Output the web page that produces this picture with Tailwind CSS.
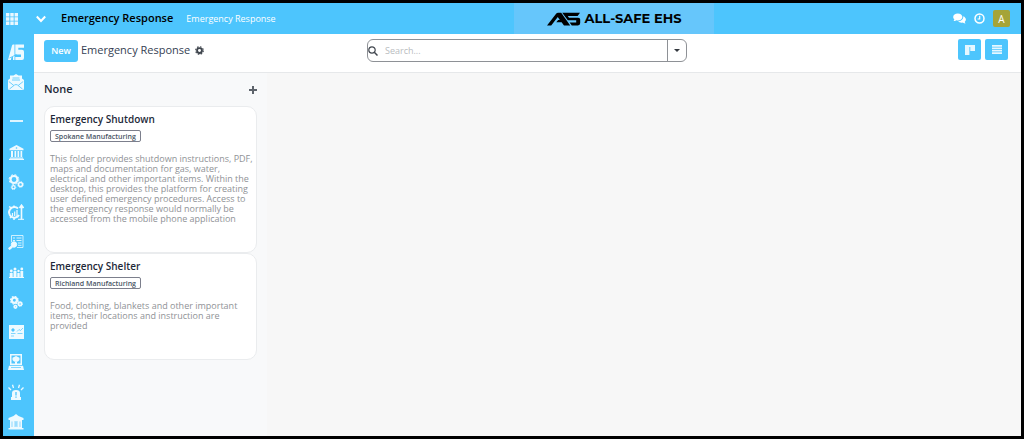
<!DOCTYPE html>
<html lang="en">
<head>
  <meta charset="UTF-8" />
  <title>Emergency Response</title>
  <meta name="viewport" content="width=device-width, initial-scale=1.0" />
  <script src="https://cdn.jsdelivr.net/npm/@tailwindcss/browser@4"></script>
</head>
<body class="h-screen overflow-hidden border-3 border-black bg-[#f7f7f7] font-['Open_Sans','Noto_Sans',sans-serif] text-gray-800 flex flex-col">

  <!-- Top bar -->
  <header class="h-[31px] shrink-0 bg-[#4dc5fd] flex items-center text-white pr-[11px]">
    <div class="flex flex-1 items-center">
      <button aria-label="Apps" class="ml-[3px]">
        <svg class="size-3" viewBox="0 0 12 12" fill="#e9f8ff"><path d="M0 0h3.4v3.4H0zM4.3 0h3.4v3.4H4.3zM8.6 0H12v3.4H8.6zM0 4.3h3.4v3.4H0zM4.3 4.3h3.4v3.4H4.3zM8.6 4.3H12v3.4H8.6zM0 8.6h3.4V12H0zM4.3 8.6h3.4V12H4.3zM8.6 8.6H12V12H8.6z"/></svg>
      </button>
      <button aria-label="Toggle menu" class="ml-[18px]">
        <svg class="h-[8px] w-[10px]" viewBox="0 0 10 8" fill="none" stroke="#fff" stroke-width="2"><path d="M.8 1.5L5 6l4.2-4.5"/></svg>
      </button>
      <a href="#" class="ml-[15px] text-[11px] font-semibold text-black whitespace-nowrap">Emergency Response</a>
      <a href="#" class="ml-[13px] text-[9px] whitespace-nowrap">Emergency Response</a>
    </div>
    <div class="h-full w-[200px] bg-[#66c6fb] flex items-center justify-center gap-[4px] text-black">
      <svg class="h-[14px] w-[34px]" viewBox="0 0 34 14" fill="currentColor">
        <path d="M0 13.4L9.300 1.600Q10 .8 11 .8h3.200l9 12.600H17l-2.400-3.200H9.300l1.800-2.300h1.700L10.800 5 4.200 13.400z"/>
        <path d="M15.200.8H33l-2.400 3.100H20.800l1.200 1.800h9.200q2 0 2 1.800v3.600q0 2.300-2.300 2.300h-6.100L22.600 10.500h6.600V8.300h-8.400z"/>
      </svg>
      <span class="font-['Montserrat','Lato',sans-serif] text-[13px] font-bold leading-none whitespace-nowrap">ALL-SAFE EHS</span>
    </div>
    <div class="flex w-[296px] items-center justify-end">
      <button aria-label="Messages">
        <svg class="h-[11px] w-[13px]" viewBox="0 0 13 11" fill="#fff"><path d="M4.800.5C2.200.5.2 2 .2 4c0 1 .5 1.800 1.200 2.400C1.200 7.200.8 7.700.4 8.100c1.200 0 2.200-.4 2.900-.9.500.1 1 .2 1.500.2 2.600 0 4.600-1.500 4.600-3.400S7.400.5 4.800.5z"/><path d="M10.300 3.200c.1 3.200-2.400 5-5.300 5.100.8.900 2.100 1.400 3.500 1.400.5 0 .9-.1 1.300-.2.700.6 1.700.9 2.800.9-.4-.4-.7-.8-.9-1.500.7-.6 1.200-1.300 1.200-2.300 0-1.500-1.100-2.700-2.600-3.400z"/></svg>
      </button>
      <button aria-label="Activities" class="ml-[8px]">
        <svg class="size-[11px]" viewBox="0 0 11 11" fill="none" stroke="#fff" stroke-width="1.500"><circle cx="5.500" cy="5.500" r="4.500"/><path d="M5.700 2.800V6H3.600" stroke-width="1.200"/></svg>
      </button>
      <button class="ml-[8px] size-[17px] rounded-xs bg-[#a5a437] text-[10px] leading-none text-white">A</button>
    </div>
  </header>

  <div class="flex flex-1 min-h-0">

    <!-- App sidebar -->
    <nav class="w-[31px] shrink-0 bg-[#4dc5fd] pt-[3px] pr-[5px] flex flex-col text-[#eefaff] overflow-hidden">
      <a href="#" aria-label="All-Safe" class="h-[30px] shrink-0 grid place-items-center">
        <svg class="h-[17px] w-4" viewBox="0 0 16 17" fill="currentColor"><path d="M0 16L4 1.500Q4.300.5 5.300.5H6.500V16H5v-3H3.600L2.800 16z"/><path d="M7.300.5H16v3.200h-5.700v2H14q2 0 2 2V14q0 2-2 2H7.300v-3H13v-2.500H7.300z"/><path d="M1.500 14l7-3.500" stroke="#4dc5fd" stroke-width=".8"/></svg>
      </a>
      <a href="#" aria-label="Mail" class="h-[30px] shrink-0 grid place-items-center">
        <svg class="size-4" viewBox="0 0 16 16" fill="currentColor"><path d="M8 0l2.500 1.500H14v3l2 1.500v8.500q0 1.500-1.500 1.500h-13Q0 16 0 14.500V6l2-1.500v-3h3.500z"/><path d="M4.500 4h7M4 6h8M.8 7.500l5 4M15.200 7.500l-5 4M1.500 15l5-4q1.500-1 3 0l5 4" fill="none" stroke="#4dc5fd" stroke-width=".8"/></svg>
      </a>
      <hr class="mx-auto mt-[23px] mb-[15px] w-[13px] border-t-2 border-[#dff5ff]" />
      <a href="#" aria-label="Organization" class="h-[30px] shrink-0 grid place-items-center">
        <svg class="size-[15px]" viewBox="0 0 15 15" fill="currentColor"><path d="M7.500 0L14.500 3.800V5.200H.5V3.800zM2 6h2v6H2zM5.500 6h1.700v6H5.500zM8.500 6h1.700v6H8.500zM11.500 6h1.700v6h-1.700zM1 12.500h13V13.500H1zM0 13.800h15V15H0z"/><circle cx="7.500" cy="3" r=".8" fill="#4dc5fd"/></svg>
      </a>
      <a href="#" aria-label="Settings" class="h-[30px] shrink-0 grid place-items-center">
        <svg class="size-4" viewBox="0 0 16 16" fill="none" stroke="currentColor"><circle cx="6" cy="5.500" r="3.500" stroke-width="2.200"/><circle cx="6" cy="5.500" r="4.900" stroke-width="1" stroke-dasharray="2 1.850"/><circle cx="12.500" cy="10.500" r="2" stroke-width="1.500"/><circle cx="12.500" cy="10.500" r="3" stroke-width=".7" stroke-dasharray="1.200 1.150"/><circle cx="5.500" cy="13.300" r="1.600" stroke-width="1.300"/><circle cx="5.500" cy="13.300" r="2.400" stroke-width=".6" stroke-dasharray="1 .9"/></svg>
      </a>
      <a href="#" aria-label="Performance" class="h-[30px] shrink-0 grid place-items-center">
        <svg class="size-4" viewBox="0 0 16 16" fill="none" stroke="currentColor"><path d="M10 4.500A5.300 5.300 0 1 0 11 11" stroke-width="2"/><path d="M1 2.700l2 1M.3 8H2M6 1.500v2M2 14l1.500-1.500M6 13.500V16" stroke-width="1.500"/><path d="M4.500 12V9M6.700 12V7.500M9 12V6" stroke-width="1.200"/><path d="M13.500 15.500V2M11.500 4l2-2.800 2 2.800" stroke-width="1.600"/><path d="M10 15.300h6"/></svg>
      </a>
      <a href="#" aria-label="Inspections" class="h-[30px] shrink-0 grid place-items-center">
        <svg class="size-4" viewBox="0 0 16 16" fill="none" stroke="currentColor"><path d="M3.500 8V1.500h11.500v12H9" stroke-width="1" opacity=".8"/><path d="M5 4h2M8.500 4h5M5 6.500h2M8.500 6.500h5M10 9h3.500M10 11.300h3.500" opacity=".85"/><circle cx="6" cy="10.500" r="2.700" fill="currentColor"/><path d="M4 12.500L.8 15.200" stroke-width="2.400"/></svg>
      </a>
      <a href="#" aria-label="Teams" class="h-[30px] shrink-0 grid place-items-center">
        <svg class="h-3 w-[15px]" viewBox="0 0 15 12" fill="currentColor"><circle cx="2.300" cy="5" r="1.400"/><circle cx="6" cy="3" r="1.500"/><circle cx="9.500" cy="5" r="1.200"/><circle cx="12.800" cy="3" r="1.400"/><path d="M.7 7h3v4h-3zM4.500 5h3v6h-3zM8.300 7h2.400v4H8.300zM11.400 5h2.800v6h-2.800zM0 11h15v1H0z"/></svg>
      </a>
      <a href="#" aria-label="Configuration" class="h-[30px] shrink-0 grid place-items-center">
        <svg class="size-[13px]" viewBox="0 0 12 12" fill="none" stroke="currentColor"><circle cx="4" cy="4" r="2.400" stroke-width="2.100"/><circle cx="4" cy="4" r="3.600" stroke-dasharray="1.500 1.330"/><circle cx="9.300" cy="7.300" r="1.500" stroke-width="1.600"/><circle cx="9.300" cy="7.300" r="2.300" stroke-width=".7" stroke-dasharray="1 .8"/><circle cx="5" cy="10" r="1.200" stroke-width="1.500"/></svg>
      </a>
      <a href="#" aria-label="ID cards" class="h-[30px] shrink-0 grid place-items-center">
        <svg class="h-[14px] w-[15px]" viewBox="0 0 15 14" fill="currentColor"><path d="M0 0h15v14H0z"/><g fill="none" stroke="#4dc5fd"><circle cx="4" cy="5" r="1.200" fill="#4dc5fd"/><path d="M2 8.500h4.500M8 6.500l2-2 1.500 1L14 3M8.500 8.500h5M2 11h3" stroke-width=".7"/></g></svg>
      </a>
      <a href="#" aria-label="Training" class="h-[30px] shrink-0 grid place-items-center">
        <svg class="size-4" viewBox="0 0 16 16" fill="currentColor"><path fill-rule="evenodd" d="M2 0h12v11H2zM3.500 1.500v8h9v-8z"/><path d="M8 2l3.500 1.700V6L10 7.500 8 8 6 7.500 4.500 6V3.700zM7 7.500h2V10H7z"/><path d="M1 11.800h14l1 4.200H0z"/><path d="M3 13.500h10" stroke="#4dc5fd" stroke-width=".7"/></svg>
      </a>
      <a href="#" aria-label="Emergency" class="h-[30px] shrink-0 grid place-items-center">
        <svg class="size-4" viewBox="0 0 16 16" fill="currentColor"><path d="M4 13V9q0-3 4-3t4 3v4h1v3H3v-3z"/><path d="M8 8v3.500M8 12.500v1.200" stroke="#4dc5fd" stroke-width="1.300"/><path d="M5.500 4L4.500.8M10.500 4l1-3.200M3 6L.5 3.500M13 6l2.500-2.500" stroke="currentColor" stroke-width="1.300"/></svg>
      </a>
      <a href="#" aria-label="Facility" class="h-[30px] shrink-0 grid place-items-center">
        <svg class="size-4" viewBox="0 0 16 16" fill="currentColor"><path d="M8 0l2.500 2L15.500 4v2H.5V4l5-2zM2 6h12v8H2zM.5 14h15v1.500H.5z"/><path d="M4 7.500V13M12 7.500V13M6 8h4M6 10h4M6 12h4M8 7.500v5" stroke="#4dc5fd" stroke-width=".6"/></svg>
      </a>
    </nav>

    <div class="flex flex-1 min-w-0 flex-col">

      <!-- Control panel -->
      <div class="h-[39px] shrink-0 border-b border-[#e6e8ea] bg-white flex pt-[5px] pl-[10px]">
        <div class="flex h-[23px] flex-1 items-center">
          <button class="h-[22px] w-[34px] rounded-[3px] bg-[#4dc5fd] text-[9px] font-semibold text-white">New</button>
          <h1 class="ml-[3px] text-[11px] text-gray-700 whitespace-nowrap">Emergency Response</h1>
          <button aria-label="Actions" class="ml-[5px]">
            <svg class="size-[9px]" viewBox="0 0 10 10" fill="none" stroke="#40464e"><circle cx="5" cy="5" r="2.700" stroke-width="2.100"/><circle cx="5" cy="5" r="4.200" stroke-width="1.300" stroke-dasharray="1.750 1.550"/></svg>
          </button>
        </div>
        <div class="flex h-[23px] w-[320px] items-center rounded-[6px] border border-[#8e9196]">
          <svg class="size-[10px] shrink-0" viewBox="0 0 10 10" fill="none" stroke="#40464e"><circle cx="4" cy="4" r="3.200" stroke-width="1.200"/><path d="M6.300 6.300L9.500 9.500" stroke-width="1.500"/></svg>
          <input type="search" aria-label="Search" placeholder="Search..." class="ml-[7px] min-w-0 flex-1 text-[9px] outline-none placeholder:text-[#b9bcc0]" />
          <button aria-label="Search options" class="grid h-full w-[19px] place-items-center border-l border-[#8e9196]">
            <svg class="h-[3px] w-[6px]" viewBox="0 0 6 3" fill="#33383f"><path d="M0 0h6L3 3z"/></svg>
          </button>
        </div>
        <div class="flex w-[334px] justify-end gap-[4px] pr-[13px]">
          <button aria-label="Kanban view" class="grid h-[21px] w-[23px] place-items-center rounded-xs bg-[#4dc5fd]">
            <svg class="size-[10px]" viewBox="0 0 10 10" fill="#e6f7ff"><path d="M0 0h10v2H0zM0 2h4.400v8H0zM5.300 2H10v4H5.300z"/></svg>
          </button>
          <button aria-label="List view" class="grid h-[21px] w-[23px] place-items-center rounded-xs bg-[#4dc5fd]">
            <svg class="h-[9px] w-[10px]" viewBox="0 0 10 9" fill="#e6f7ff"><path d="M0 0h10v1.700H0zM0 2.400h10v1.700H0zM0 4.800h10v1.700H0zM0 7.200h10V9H0z"/></svg>
          </button>
        </div>
      </div>

      <!-- Kanban -->
      <main class="flex-1 min-h-0">
        <section class="h-full w-[233px] bg-[#f8f9fa] px-[10px]">
          <div class="flex h-[33px] items-center justify-between">
            <h2 class="text-[11px] font-semibold">None</h2>
            <button aria-label="Add">
              <svg class="size-2" viewBox="0 0 8 8" stroke="#5d636b" stroke-width="2"><path d="M4 0v8M0 4h8"/></svg>
            </button>
          </div>
          <article class="h-[147px] rounded-[10px] border border-[#eaecee] bg-white pl-[5px] pt-[4px]">
            <h3 class="text-[10px] leading-[16px] font-semibold">Emergency Shutdown</h3>
            <span class="mt-[3px] flex h-[12px] w-fit items-center rounded-xs border border-[#7c7f8c] px-[4px] text-[7px] leading-none font-semibold text-gray-600">Spokane Manufacturing</span>
            <p class="mt-[12px] text-[9px] leading-[10px] text-[#8f9296]">This folder provides shutdown instructions, PDF, maps and documentation for gas, water, electrical and other important items. Within the desktop, this provides the platform for creating user defined emergency procedures. Access to the emergency response would normally be accessed from the mobile phone application</p>
          </article>
          <article class="h-[107px] rounded-[10px] border border-[#eaecee] bg-white pl-[5px] pt-[4px]">
            <h3 class="text-[10px] leading-[16px] font-semibold">Emergency Shelter</h3>
            <span class="mt-[3px] flex h-[12px] w-fit items-center rounded-xs border border-[#7c7f8c] px-[4px] text-[7px] leading-none font-semibold text-gray-600">Richland Manufacturing</span>
            <p class="mt-[12px] text-[9px] leading-[10px] text-[#8f9296]">Food, clothing, blankets and other important items, their locations and instruction are provided</p>
          </article>
        </section>
      </main>
    </div>
  </div>
</body>
</html>
